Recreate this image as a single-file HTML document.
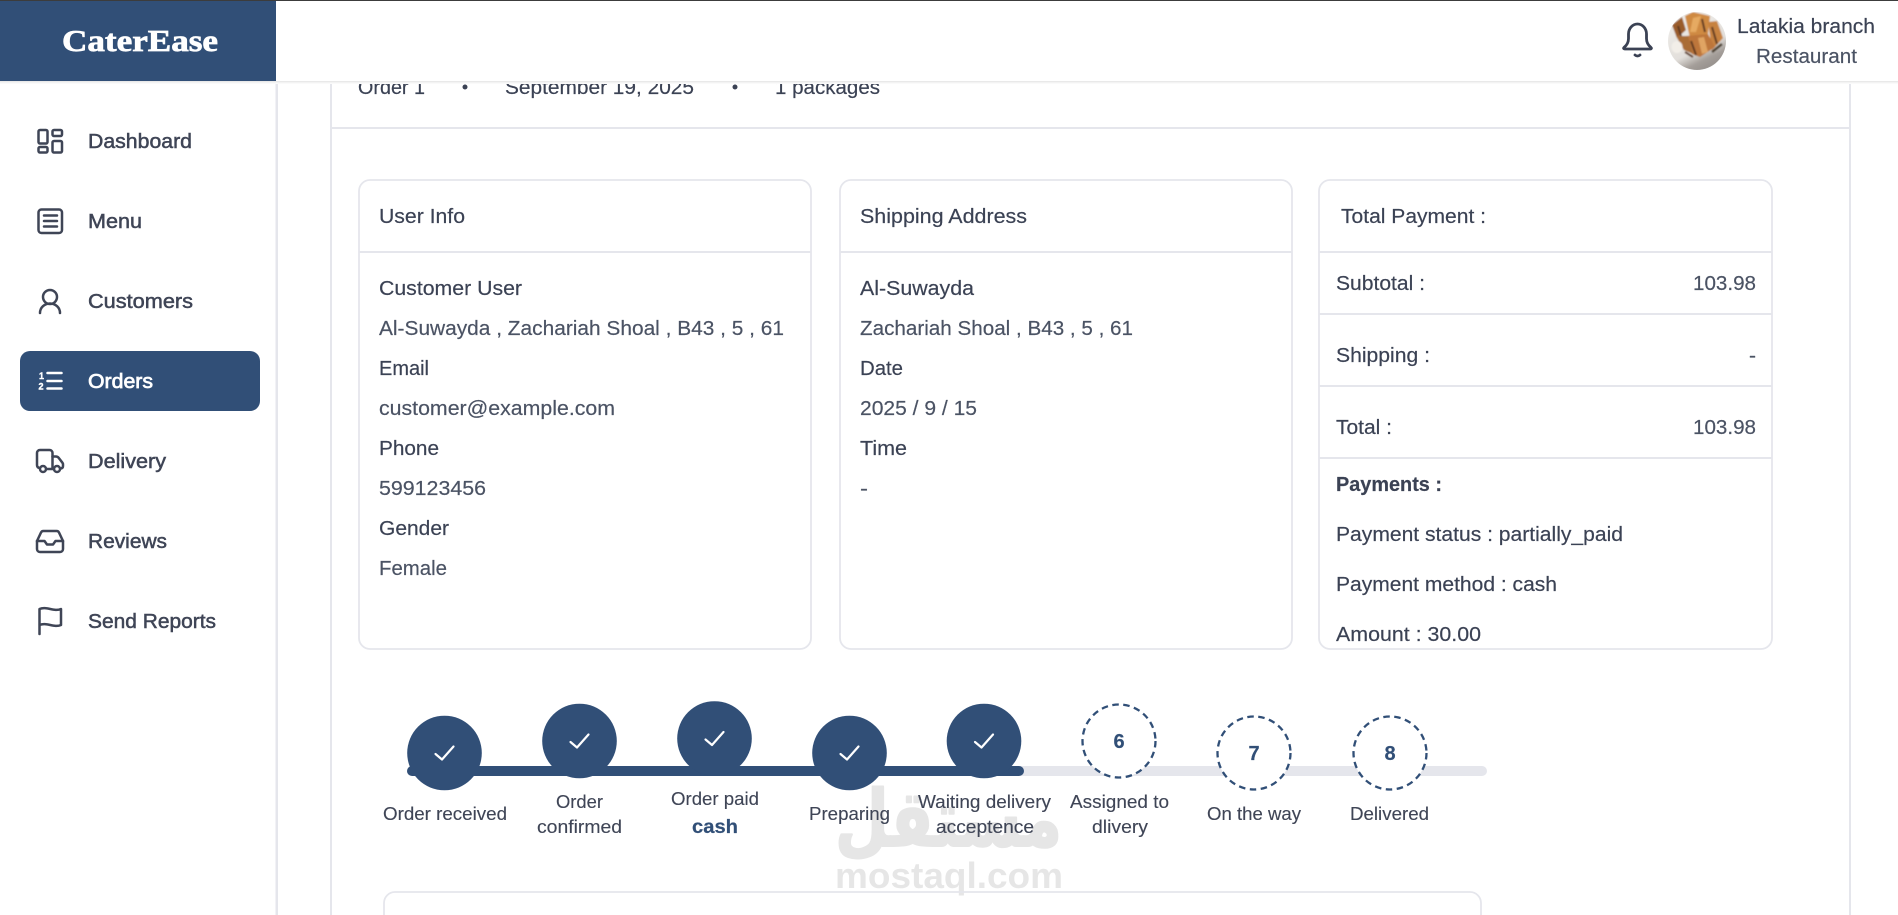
<!DOCTYPE html>
<html lang="en"><head><meta charset="utf-8"><title>CaterEase - Order</title>
<style>
html,body{margin:0;padding:0;background:#fff;width:1898px;height:915px;overflow:hidden}
svg{display:block}
text{font-family:"Liberation Sans","DejaVu Sans",sans-serif;font-size:20px;fill:#3b4254;stroke:#3b4254;stroke-width:.18px}
.v{fill:#4b5364;stroke:#4b5364}
.nav{fill:#3f4556;stroke:#3f4556;stroke-width:.5px}
.lab{font-size:18.400px;fill:#3f4556;stroke:#3f4556;stroke-width:.12px}
.num{font-size:20px;font-weight:bold;fill:#314f77;stroke:#314f77;text-anchor:middle}
.ic{fill:none;stroke:#3f4556;stroke-width:2.500;stroke-linecap:round;stroke-linejoin:round}
.card{fill:#fff;stroke:#e5e6ec;stroke-width:1.800}
.ln{fill:#e5e6ec}
.ck{fill:none;stroke:#fff;stroke-width:2.200;stroke-linecap:round;stroke-linejoin:round}
.dash{fill:#fff;stroke:#314f77;stroke-width:2.300;stroke-dasharray:6.500 4.500}
</style></head><body>
<svg xmlns="http://www.w3.org/2000/svg" width="1898" height="915" viewBox="0 0 1898 915">
<defs><clipPath id="av"><circle cx="1697" cy="41" r="29"/></clipPath>
<filter id="sf" x="-10%" y="-10%" width="120%" height="120%"><feGaussianBlur stdDeviation=".7"/></filter>
<linearGradient id="pl" x1="0" y1="0" x2="0.5" y2="1"><stop offset="0" stop-color="#f1efec"/><stop offset=".72" stop-color="#e2dfdb"/><stop offset=".9" stop-color="#a49e99"/><stop offset="1" stop-color="#9a9490"/></linearGradient></defs>
<rect width="1898" height="915" fill="#fff"/>

<!-- main panel -->
<rect x="330" y="60" width="2" height="855" class="ln"/>
<rect x="1849" y="60" width="2" height="855" class="ln"/>
<rect x="330" y="127" width="1521" height="2" class="ln"/>

<text lengthAdjust="spacingAndGlyphs" x="358" y="94" textLength="67">Order 1</text>
<circle cx="465" cy="87" r="2.500" fill="#3b4254"/>
<text lengthAdjust="spacingAndGlyphs" x="505" y="94" textLength="189">September 19, 2025</text>
<circle cx="735" cy="87" r="2.500" fill="#3b4254"/>
<text lengthAdjust="spacingAndGlyphs" x="775" y="94" textLength="105">1 packages</text>

<!-- user info -->
<rect class="card" x="359" y="180" width="452" height="469" rx="11"/>
<rect class="ln" x="359" y="251" width="452" height="2"/>
<text lengthAdjust="spacingAndGlyphs" x="379" y="223" textLength="86">User Info</text>
<text lengthAdjust="spacingAndGlyphs" x="379" y="295" textLength="143">Customer User</text>
<text lengthAdjust="spacingAndGlyphs" class="v" x="379" y="335" textLength="405">Al-Suwayda , Zachariah Shoal , B43 , 5 , 61</text>
<text lengthAdjust="spacingAndGlyphs" x="379" y="375" textLength="50">Email</text>
<text lengthAdjust="spacingAndGlyphs" class="v" x="379" y="415" textLength="236">customer@example.com</text>
<text lengthAdjust="spacingAndGlyphs" x="379" y="455" textLength="60">Phone</text>
<text lengthAdjust="spacingAndGlyphs" class="v" x="379" y="495" textLength="107">599123456</text>
<text lengthAdjust="spacingAndGlyphs" x="379" y="535" textLength="70">Gender</text>
<text lengthAdjust="spacingAndGlyphs" class="v" x="379" y="575" textLength="68">Female</text>

<!-- shipping -->
<rect class="card" x="840" y="180" width="452" height="469" rx="11"/>
<rect class="ln" x="840" y="251" width="452" height="2"/>
<text lengthAdjust="spacingAndGlyphs" x="860" y="223" textLength="167">Shipping Address</text>
<text lengthAdjust="spacingAndGlyphs" x="860" y="295" textLength="114">Al-Suwayda</text>
<text lengthAdjust="spacingAndGlyphs" class="v" x="860" y="335" textLength="273">Zachariah Shoal , B43 , 5 , 61</text>
<text lengthAdjust="spacingAndGlyphs" x="860" y="375" textLength="43">Date</text>
<text lengthAdjust="spacingAndGlyphs" class="v" x="860" y="415" textLength="117">2025 / 9 / 15</text>
<text lengthAdjust="spacingAndGlyphs" x="860" y="455" textLength="47">Time</text>
<text lengthAdjust="spacingAndGlyphs" class="v" x="860" y="495" textLength="8">-</text>

<!-- payment -->
<rect class="card" x="1319" y="180" width="453" height="469" rx="11"/>
<rect class="ln" x="1319" y="251" width="453" height="2"/>
<rect class="ln" x="1319" y="313" width="453" height="2"/>
<rect class="ln" x="1319" y="385" width="453" height="2"/>
<rect class="ln" x="1319" y="457" width="453" height="2"/>
<text lengthAdjust="spacingAndGlyphs" x="1341" y="223" textLength="145">Total Payment :</text>
<text lengthAdjust="spacingAndGlyphs" x="1336" y="290" textLength="89">Subtotal :</text>
<text lengthAdjust="spacingAndGlyphs" class="v" x="1693" y="290" textLength="63">103.98</text>
<text lengthAdjust="spacingAndGlyphs" x="1336" y="362" textLength="94">Shipping :</text>
<text lengthAdjust="spacingAndGlyphs" class="v" x="1749" y="362" textLength="7">-</text>
<text lengthAdjust="spacingAndGlyphs" x="1336" y="434" textLength="56">Total :</text>
<text lengthAdjust="spacingAndGlyphs" class="v" x="1693" y="434" textLength="63">103.98</text>
<text lengthAdjust="spacingAndGlyphs" x="1336" y="491" textLength="106" font-weight="bold">Payments :</text>
<text lengthAdjust="spacingAndGlyphs" x="1336" y="541" textLength="287">Payment status : partially_paid</text>
<text lengthAdjust="spacingAndGlyphs" x="1336" y="591" textLength="221">Payment method : cash</text>
<text lengthAdjust="spacingAndGlyphs" x="1336" y="641" textLength="145">Amount : 30.00</text>

<!-- watermark -->
<text x="835" y="846" textLength="227" lengthAdjust="spacingAndGlyphs" style="font-family:'DejaVu Sans',sans-serif;font-weight:bold;font-size:78px;fill:#e6e6e6;stroke:#e6e6e6;stroke-width:2px;stroke-linejoin:round" direction="rtl" text-anchor="start" transform="translate(227 0)">مستقل</text>
<text x="835" y="888" textLength="228" lengthAdjust="spacingAndGlyphs" style="font-weight:bold;font-size:36px;fill:#e6e6e6;stroke:none">mostaql.com</text>

<!-- bottom card -->
<rect class="card" x="384" y="892" width="1097" height="60" rx="11" style="fill:none"/>

<!-- stepper -->
<rect x="407" y="766" width="1080" height="10" rx="5" fill="#e5e6ec"/>
<rect x="407" y="766" width="617" height="10" rx="5" fill="#314f77"/>
<g fill="#314f77">
<circle cx="444.500" cy="753" r="37.300"/><circle cx="579.500" cy="741" r="37.300"/><circle cx="714.500" cy="738.500" r="37.300"/><circle cx="849.500" cy="753" r="37.300"/><circle cx="984" cy="741" r="37.300"/>
</g>
<path class="ck" d="M435.500 754l6.500 5.500L453.500 746.500"/>
<path class="ck" d="M570.500 742l6.500 5.500L588.500 734.500"/>
<path class="ck" d="M705.500 739.500l6.500 5.500L723.500 732"/>
<path class="ck" d="M840.500 754l6.500 5.500L858.500 746.500"/>
<path class="ck" d="M975 742l6.500 5.500L993 734.500"/>
<circle class="dash" cx="1119" cy="741" r="36.500"/><circle class="dash" cx="1254" cy="753" r="36.500"/><circle class="dash" cx="1390" cy="753" r="36.500"/>
<text class="num" x="1119" y="748">6</text><text class="num" x="1254" y="760">7</text><text class="num" x="1390" y="760">8</text>

<text lengthAdjust="spacingAndGlyphs" class="lab" x="383" y="820" textLength="124">Order received</text>
<text lengthAdjust="spacingAndGlyphs" class="lab" x="556" y="808" textLength="47">Order</text>
<text lengthAdjust="spacingAndGlyphs" class="lab" x="537" y="833" textLength="85">confirmed</text>
<text lengthAdjust="spacingAndGlyphs" class="lab" x="671" y="805" textLength="88">Order paid</text>
<text lengthAdjust="spacingAndGlyphs" x="692" y="833" textLength="46" font-weight="bold" style="fill:#314f77;stroke:#314f77;font-size:19.500px">cash</text>
<text lengthAdjust="spacingAndGlyphs" class="lab" x="809" y="820" textLength="81">Preparing</text>
<text lengthAdjust="spacingAndGlyphs" class="lab" x="918" y="808" textLength="133">Waiting delivery</text>
<text lengthAdjust="spacingAndGlyphs" class="lab" x="936" y="833" textLength="98">acceptence</text>
<text lengthAdjust="spacingAndGlyphs" class="lab" x="1070" y="808" textLength="99">Assigned to</text>
<text lengthAdjust="spacingAndGlyphs" class="lab" x="1092" y="833" textLength="56">dlivery</text>
<text lengthAdjust="spacingAndGlyphs" class="lab" x="1207" y="820" textLength="94">On the way</text>
<text lengthAdjust="spacingAndGlyphs" class="lab" x="1350" y="820" textLength="79">Delivered</text>

<!-- sidebar -->
<rect x="0" y="0" width="276" height="915" fill="#fff"/>
<rect x="275.500" y="0" width="2.500" height="915" class="ln"/>
<rect x="20" y="351" width="240" height="60" rx="10" fill="#314f77"/>

<!-- Dashboard -->
<g class="ic"><rect x="38.500" y="130" width="9" height="13.500" rx="1.500"/><rect x="38.500" y="147" width="9" height="5.500" rx="1.500"/><rect x="52.500" y="130" width="9.500" height="6" rx="1.500"/><rect x="52.500" y="141" width="9.500" height="11.500" rx="1.500"/></g>
<text lengthAdjust="spacingAndGlyphs" class="nav" x="88" y="148" textLength="104">Dashboard</text>
<!-- Menu -->
<g class="ic"><rect x="38.500" y="209.500" width="23.500" height="23.500" rx="3"/><path d="M44 215.500h13M44 221h13M44 226.500h13"/></g>
<text lengthAdjust="spacingAndGlyphs" class="nav" x="88" y="228" textLength="54">Menu</text>
<!-- Customers -->
<g class="ic"><circle cx="50" cy="297" r="7"/><path d="M40 313c0-5.500 4.500-9.500 10-9.500s10 4 10 9.500"/></g>
<text lengthAdjust="spacingAndGlyphs" class="nav" x="88" y="308" textLength="105">Customers</text>
<!-- Orders -->
<g class="ic" style="stroke:#fff"><path d="M47.500 373h14M47.500 381h14M47.500 388.500h14"/></g>
<text x="39" y="379" style="font-size:9px;font-weight:bold;fill:#fff;stroke:#fff;stroke-width:.4px">1</text>
<text x="38.500" y="389.500" style="font-size:9px;font-weight:bold;fill:#fff;stroke:#fff;stroke-width:.4px">2</text>
<text lengthAdjust="spacingAndGlyphs" x="88" y="388" textLength="65" style="fill:#fff;stroke:#fff;stroke-width:.7px">Orders</text>
<!-- Delivery -->
<g class="ic"><path d="M39.500 468c-1.500-.3-2.500-1.500-2.500-3v-12c0-1.700 1.300-3 3-3h9.500c1.700 0 3 1.300 3 3v15.500"/><path d="M52.500 456.500h3.500c1 0 2 .5 2.600 1.300l3.900 5c.3.5.5 1 .5 1.600v1.600c0 1.500-.8 2.300-2 2.500"/><circle cx="43" cy="469" r="3"/><circle cx="57" cy="469" r="3"/><path d="M46 469h8"/></g>
<text lengthAdjust="spacingAndGlyphs" class="nav" x="88" y="468" textLength="78">Delivery</text>
<!-- Reviews -->
<g class="ic"><path d="M37 541l4-8.500c.5-1 1.300-1.500 2.300-1.500h13.400c1 0 1.800.5 2.300 1.500l4 8.500v8c0 1.700-1.300 3-3 3H40c-1.700 0-3-1.300-3-3z"/><path d="M37 541h7.500l2.500 3.500h6l2.500-3.500H63"/></g>
<text lengthAdjust="spacingAndGlyphs" class="nav" x="88" y="548" textLength="79">Reviews</text>
<!-- Send Reports -->
<g class="ic"><path d="M39.500 634V609c7-3 14.500 3 21.500 0v16c-7 3-14.500-3-21.500 0"/></g>
<text lengthAdjust="spacingAndGlyphs" class="nav" x="88" y="628" textLength="128">Send Reports</text>

<!-- header -->
<rect x="0" y="0" width="1898" height="81" fill="#fff"/>
<rect x="0" y="81" width="1898" height="1" fill="#e9e9e9"/>
<rect x="0" y="82" width="1898" height="1" fill="#f3f3f3"/>
<rect x="0" y="83" width="1898" height="1" fill="#fafafa"/>
<rect x="0" y="1" width="276" height="80" fill="#314f77"/>
<rect x="0" y="0" width="1898" height="1" fill="#3c3c3c"/>
<text x="62" y="51" textLength="156" lengthAdjust="spacingAndGlyphs" style="font-family:'Liberation Serif',serif;font-weight:bold;font-size:31px;fill:#fff;stroke:#fff;stroke-width:.7px">CaterEase</text>

<!-- bell -->
<g class="ic" style="stroke-width:2.800;stroke:#3b4254"><path d="M1624 47.500c2.500-2 4.500-4.500 4.500-9V34c0-5.500 4-10 9-10s9 4.500 9 10v4.500c0 4.500 2 7 4.500 9 .8.7.3 1.500-.7 1.500h-25.600c-1 0-1.500-.8-.7-1.500z"/><path d="M1635 55c1.500 1.300 3.500 1.300 5 0"/></g>

<!-- avatar -->
<g clip-path="url(#av)"><g filter="url(#sf)">
<circle cx="1697" cy="41" r="30" fill="url(#pl)"/>
<polygon points="1685,16 1693,12 1710,16 1708,34 1690,38" fill="#cf8a42"/>
<polygon points="1672,25 1682,17 1686,30 1677,38" fill="#9a5c2c"/>
<polygon points="1708,22 1717,21 1723,38 1712,50" fill="#c78240"/>
<polygon points="1686,36 1708,34 1715,47 1700,57 1692,54" fill="#bd763a"/>
<polygon points="1676,36 1688,36 1693,54 1684,50" fill="#a96c35"/>
<polygon points="1693,18 1701,16 1696,32 1690,32" fill="#e6aa62"/>
<polygon points="1698,38 1704,37 1708,52 1702,54" fill="#e0a463"/>
<path d="M1712 27l5 17M1691 41l5 14M1702 19l3 13M1678 26l3 10M1685 52l8 5" stroke="#5d3823" stroke-width="2" fill="none"/>
<ellipse cx="1677" cy="47" rx="5.500" ry="6" fill="#f2eee8"/>
<path d="M1712 52l10-8" stroke="#4a3c2c" stroke-width="2.500"/>
</g></g>

<text lengthAdjust="spacingAndGlyphs" x="1737" y="33" textLength="138">Latakia branch</text>
<text lengthAdjust="spacingAndGlyphs" x="1756" y="63" textLength="101" class="v">Restaurant</text>
</svg>
</body></html>
